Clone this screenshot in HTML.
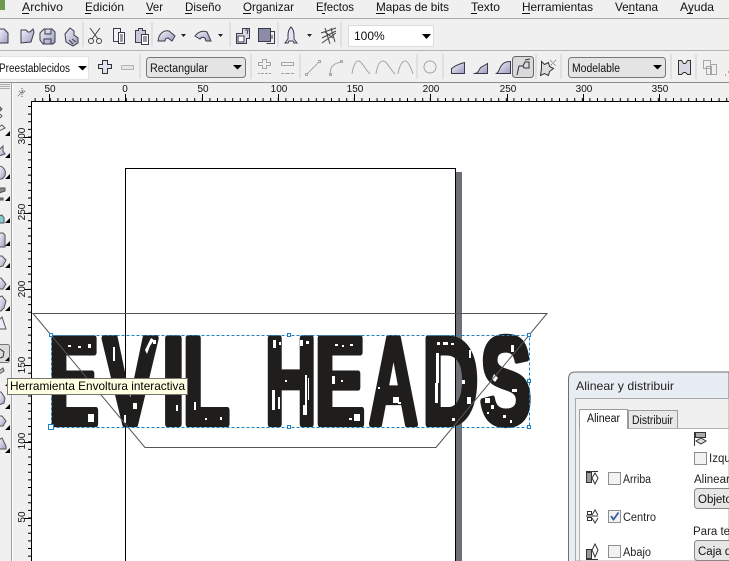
<!DOCTYPE html>
<html><head><meta charset="utf-8"><style>
html,body{margin:0;padding:0;width:729px;height:561px;overflow:hidden;background:#f0f0f0}
svg{display:block;position:absolute;left:0;top:0}
text{font-family:"Liberation Sans",sans-serif}
.m{font-size:12px;fill:#111}
.r{font-size:10px;fill:#111;text-anchor:middle}
.d{fill:none;stroke:#a6a6a6;stroke-width:1}
.s{stroke:#cfcfcf;stroke-width:1}
.c{font-size:11.5px;fill:#111}
.L{font-weight:bold;font-size:100px;fill:#1f1e1c;stroke:#1f1e1c;stroke-width:5;stroke-linejoin:round;paint-order:stroke}
</style></head><body>
<svg width="729" height="561" viewBox="0 0 729 561" xmlns="http://www.w3.org/2000/svg">
<defs><linearGradient id="lv" x1="0" y1="0" x2="1" y2="1"><stop offset="0" stop-color="#f4f4fb"/><stop offset="1" stop-color="#9c9cc0"/></linearGradient></defs>
<rect width="729" height="561" fill="#f0f0f0"/>

<!-- menu -->
<rect x="0" y="18" width="729" height="1" fill="#a9a9a9"/>
<rect x="0" y="50" width="729" height="1" fill="#b4b4b4"/>
<rect x="0" y="82" width="729" height="1" fill="#8e8e8e"/>
<g class="m">
<text x="22" y="11" textLength="41" lengthAdjust="spacingAndGlyphs">Archivo</text><rect x="22" y="13" width="7" height="1" fill="#111"/>
<text x="85" y="11" textLength="39" lengthAdjust="spacingAndGlyphs">Edición</text><rect x="85" y="13" width="6" height="1" fill="#111"/>
<text x="146" y="11" textLength="17" lengthAdjust="spacingAndGlyphs">Ver</text><rect x="146" y="13" width="7" height="1" fill="#111"/>
<text x="185" y="11" textLength="36" lengthAdjust="spacingAndGlyphs">Diseño</text><rect x="185" y="13" width="7" height="1" fill="#111"/>
<text x="243" y="11" textLength="51" lengthAdjust="spacingAndGlyphs">Organizar</text><rect x="243" y="13" width="8" height="1" fill="#111"/>
<text x="316" y="11" textLength="38" lengthAdjust="spacingAndGlyphs">Efectos</text><rect x="322" y="13" width="3" height="1" fill="#111"/>
<text x="376" y="11" textLength="73" lengthAdjust="spacingAndGlyphs">Mapas de bits</text><rect x="376" y="13" width="9" height="1" fill="#111"/>
<text x="471" y="11" textLength="29" lengthAdjust="spacingAndGlyphs">Texto</text><rect x="471" y="13" width="6" height="1" fill="#111"/>
<text x="522" y="11" textLength="71" lengthAdjust="spacingAndGlyphs">Herramientas</text><rect x="522" y="13" width="8" height="1" fill="#111"/>
<text x="615" y="11" textLength="43" lengthAdjust="spacingAndGlyphs">Ventana</text><rect x="628" y="13" width="6" height="1" fill="#111"/>
<text x="680" y="11" textLength="34" lengthAdjust="spacingAndGlyphs">Ayuda</text><rect x="687" y="13" width="6" height="1" fill="#111"/>
</g>
<path d="M0 0h5v10h-5z" fill="#6d9a4e"/>

<!-- toolbar 1 -->
<g class="s"><line x1="83" y1="22" x2="83" y2="47"/><line x1="152" y1="22" x2="152" y2="47"/><line x1="230" y1="22" x2="230" y2="47"/><line x1="278" y1="22" x2="278" y2="47"/><line x1="341" y1="22" x2="341" y2="47"/></g>
<rect x="348.500" y="25.500" width="85" height="21" fill="#fff" stroke="#dcdcdc"/>
<text x="354" y="40" font-size="12" fill="#111">100%</text>
<path d="M422 34h9l-4.500 5z" fill="#000"/>

<g stroke="#3a3a4a" fill="url(#lv)">
<path d="M-1 29h5l4 4v10h-9z"/>
<path d="M21 30h5l2 2h2l3-3 1 3-3 10-10 1z"/>
<path d="M44 29h8l3 3v10l-2 2h-10l-3-4v-7z"/><path d="M45 29v5h6v-5M44 44v-5h7v5" fill="none"/>
<path d="M65 34l5-6 4 3v4l4 3v5l-5 3-7-4z"/>
<path d="M72 39l4 3M69 40l4 4" fill="none"/>
<path d="M113.500 28.500h7v4h-1v9h-6z" fill="#f2f2f6"/><path d="M118.500 32.500h6v11h-6z" fill="#fff"/><path d="M120 35h3M120 37h3M120 39h3M120 41h3" fill="none"/>
<path d="M135.500 30.500h3v-2h4v2h3v12h-10z" fill="#c8c8d8"/><path d="M141.500 34.500h7v10h-7z" fill="#fff"/><path d="M143 37h4M143 39h4M143 41h4" fill="none"/>
<path d="M158 41c1-8 6-11 11-10l6 5-3 5-4-3c-2 0-3 1-3 3z"/>
<path d="M195 36c3-4 8-6 12-4l4 9h-5l-1-3c-2-1-4-1-5 1z"/>
<path d="M236.500 33.500h6v-5h7v10h-3v5h-10z" fill="#d8d8e6"/><path d="M238 36h6v6h-6z" fill="#fff"/><path d="M245 30h3l-1 4" fill="none"/>
<path d="M258.500 28.500h12v13h-12z" fill="#8b8da6"/><path d="M270.500 31.500h4v12h-8" fill="none"/><path d="M272 35v4" fill="none"/>
<path d="M291 27c2 2 3 5 3 8v4l3 4h-3l-1-2h-4l-1 2h-3l3-4v-4c0-3 1-6 3-8z" fill="#e3e3f0"/>
</g>
<path d="M321 33l15-5M322 38l14-7M325 28l5 16M331 28l4 14M322 43l14-10M325 32l8 6" fill="none" stroke="#444"/>
<g fill="#222"><path d="M181 34h5l-2.500 3zM218 34h5l-2.500 3zM307 34h5l-2.500 3z"/></g>
<!-- scissors -->
<g fill="none" stroke="#444"><circle cx="91" cy="41" r="2.500"/><circle cx="99" cy="41" r="2.500"/><path d="M92 39l8-11M98 39l-8-11"/></g>

<!-- toolbar 2 -->
<g class="s"><line x1="140" y1="54" x2="140" y2="79"/><line x1="251" y1="54" x2="251" y2="79"/><line x1="300" y1="54" x2="300" y2="79"/><line x1="417" y1="54" x2="417" y2="79"/><line x1="443" y1="54" x2="443" y2="79"/><line x1="536" y1="54" x2="536" y2="79"/><line x1="561" y1="54" x2="561" y2="79"/><line x1="671" y1="54" x2="671" y2="79"/><line x1="696" y1="54" x2="696" y2="79"/></g>
<rect x="-2.500" y="56.500" width="91" height="23" rx="2" fill="#fff" stroke="#e2e2e2"/>
<text x="-1" y="72" class="c" textLength="71" lengthAdjust="spacingAndGlyphs">Preestablecidos</text>
<path d="M78 66h9l-4.500 4.500z" fill="#000"/>
<path d="M102.500 60.500h5v4h4v4h-4v5h-5v-5h-4v-4h4z" fill="#dfe3f2" stroke="#333"/>
<rect x="121.500" y="65.500" width="12" height="4" fill="#e4e4ea" stroke="#b5b5b5"/>
<rect x="146.500" y="57.500" width="99" height="20" rx="3" fill="#e4e4e4" stroke="#777"/>
<text x="150" y="72" class="c" textLength="58" lengthAdjust="spacingAndGlyphs">Rectangular</text>
<path d="M233 65h9l-4.500 4.500z" fill="#000"/>
<g class="d"><path d="M262.500 59.500h4v3h4v3h-4v3h-4v-3h-4v-3h4z"/><path d="M258 73.500h2m1 0h3m1 0h3m1 0h2"/><path d="M281.500 62.500h12v3h-12zM281 73.500h3m1 0h5m1 0h3"/><path d="M307 74l12-12"/><rect x="305.500" y="73.500" width="2" height="2"/><rect x="318.500" y="60.500" width="2" height="2"/><path d="M330 75c0-8 3-12 12-13"/><rect x="329.500" y="73.500" width="2" height="2"/><rect x="340.500" y="60.500" width="2" height="2"/><path d="M352 74c1-8 4-14 7-13s6 8 11 13"/><path d="M376 74c1-7 3-13 7-13s6 7 12 13"/><path d="M398 74c1-7 4-13 7-13s6 7 8 13"/><circle cx="430" cy="67" r="6"/></g>
<g stroke="#3a3a4a" fill="url(#lv)">
<path d="M451.500 73.500v-5c4-3 9-5 13-6v11z"/>
<path d="M473.500 73.500h1c5 0 4-6 8-7l5-3v10z"/>
<path d="M496.500 73.500c3-2 3-6 5-8 2-3 5-4 9-4v12z"/>
</g>
<rect x="512.500" y="56.500" width="21" height="21" rx="3" fill="#dadadd" stroke="#666"/>
<path d="M517 75l2-9h4l2-4h4v6h-5l-1-2" fill="none" stroke="#333"/><path d="M525 60l5-1" stroke="#333"/>
<path d="M541.500 61.500l3 3 4-2 1 4 4 2-4 3-1 4-4-2-4 2 1-7z" fill="#ddd" stroke="#333"/>
<path d="M550 60l6 6M556 60l-6 6" stroke="#666" stroke-dasharray="1 1"/>
<rect x="568.500" y="57.500" width="97" height="20" rx="3" fill="#e4e4e4" stroke="#777"/>
<text x="572" y="72" class="c" textLength="48" lengthAdjust="spacingAndGlyphs">Modelable</text>
<path d="M653 65h9l-4.500 4.500z" fill="#000"/>
<path d="M678.500 60.500h3l2 3h2l2-3h3v14h-3l-2-2h-2l-2 2h-3z" fill="#d8d8e4" stroke="#333"/>
<g class="d"><rect x="703.500" y="60.500" width="7" height="8"/><rect x="710.500" y="64.500" width="6" height="10"/><rect x="706.500" y="66.500" width="5" height="8"/></g>
<path d="M725 75h1M728 72h1" stroke="#b33"/>

<!-- rulers -->
<rect x="0" y="83" width="729" height="19" fill="#f0f0f0"/>
<rect x="11" y="83" width="1" height="478" fill="#a0a0a0"/>
<rect x="12" y="83" width="1" height="478" fill="#fff"/>
<path d="M0 84.500h10M0 86.500h10M0 88.500h10" stroke="#aaa"/>
<path d="M19 91l3 3M25 91l-3 3M22 88v9M18 96l6-6" stroke="#555" stroke-dasharray="1 1" fill="none"/>
<rect x="31" y="102" width="698" height="459" fill="#fff"/>
<rect x="31" y="101" width="698" height="1" fill="#000"/>
<rect x="31" y="101" width="1" height="460" fill="#000"/>
<line x1="31" y1="99.500" x2="729" y2="99.500" stroke="#000" stroke-width="3" stroke-dasharray="1 6.600" stroke-dashoffset="-3.600"/>
<line x1="29.500" y1="102" x2="29.500" y2="561" stroke="#000" stroke-width="3" stroke-dasharray="1 6.620" stroke-dashoffset="-4"/>
<g stroke="#000"><path d="M49.500 94v8M125.500 94v8M202.500 94v8M278.500 94v8M354.500 94v8M430.500 94v8M507.500 94v8M583.500 94v8M659.500 94v8"/>
<path d="M24 137.500h7M24 213.500h7M24 289.500h7M24 365.500h7M24 442.500h7M24 518.500h7"/></g>
<g class="r"><text x="50" y="92">50</text><text x="125" y="92">0</text><text x="203" y="92">50</text><text x="279" y="92">100</text><text x="355" y="92">150</text><text x="431" y="92">200</text><text x="508" y="92">250</text><text x="584" y="92">300</text><text x="660" y="92">350</text></g>
<g class="r">
<text transform="translate(25,136) rotate(-90)">300</text>
<text transform="translate(25,212) rotate(-90)">250</text>
<text transform="translate(25,289) rotate(-90)">200</text>
<text transform="translate(25,365) rotate(-90)">150</text>
<text transform="translate(25,441) rotate(-90)">100</text>
<text transform="translate(25,517) rotate(-90)">50</text></g>

<!-- toolbox -->
<g fill="url(#lv)" stroke="#555">
<path d="M0 107l2 2-2 2zM0 114l2 2-2 2" fill="#fff"/>
<path d="M-1 127l3-2 3 3-6 3z" fill="#eee"/>
<path d="M-1 150l4-4v5l2 3-6 2z"/>
<path d="M-1 166a7 7 0 0 1 3 13h-3z"/>
<path d="M-1 188h6v3l-6 2zM-1 198h4v2h-4z" fill="#888"/>
<path d="M-1 216l3-1 2 3v5h-5z" fill="#7fd0d8"/>
<path d="M-1 233h4l2 2v12h-6z"/>
<path d="M-1 256h3l4 4-3 6-4 1z"/>
<path d="M-1 278h2l5 6-3 5h-4z"/>
<path d="M-1 297l3-1 4 5-2 7-3 3h-2z"/>
<path d="M-1 320l3-3 4 12h-7z" fill="#ececf6"/>
</g>
<rect x="-3.500" y="344.500" width="13" height="18" rx="2" fill="#dcdcdc" stroke="#777"/>
<path d="M0 349l4 3-1 5-3 1" fill="none" stroke="#333"/>
<g fill="url(#lv)" stroke="#555"><path d="M-1 371l4-3 1 3-5 3z"/><path d="M-1 392h2l4 6-1 5-5 2z"/><path d="M-1 416l3 0 4 5-3 5h-4z"/><path d="M-1 440l3-2 4 8v3h-7z"/></g>
<g fill="#000"><path d="M10 131v5h-5zM10 153v5h-5zM10 174v5h-5zM10 196v5h-5zM10 218v5h-5zM10 241v5h-5zM10 263v5h-5zM10 285v5h-5zM10 306v5h-5zM9 357v4h-4zM10 381v5h-5zM10 404v5h-5zM10 425v5h-5zM10 448v5h-5z"/></g>

<!-- page -->
<rect x="456" y="172" width="6" height="389" fill="#6e7077"/>
<path d="M125.500 561V168.500H455.500V561" fill="none" stroke="#000"/>

<!-- artwork -->
<g>
<text class="L" transform="translate(48.500,424) scale(.76,1.24)">E</text>
<text class="L" transform="translate(103,424) scale(.813,1.24)">V</text>
<text class="L" transform="translate(161.500,424) scale(.855,1.24)">I</text>
<text class="L" transform="translate(182.400,424) scale(.78,1.24)">L</text>
<text class="L" transform="translate(264.800,424) scale(.72,1.24)">H</text>
<text class="L" transform="translate(314.500,424) scale(.76,1.24)">E</text>
<text class="L" transform="translate(369,424) scale(.679,1.24)">A</text>
<text class="L" transform="translate(422.300,424) scale(.78,1.24)">D</text>
<text class="L" transform="translate(480,424) scale(.775,1.24)">S</text>
</g>
<!-- distress -->
<path fill="#fff" d="M68 345h3v2h-3zM78 346h3v2h-3zM88 344h3v4h-3zM88 414h6v8h-6zM113 347h2v14h-2zM145 350l6-12 3 2-4 6-3 8zM153 340h3v4h-3zM133 403h4v6h-4zM124 415h2v8h-2zM176 405h2v6h-2zM194 402h2v8h-2zM205 418h2v2h-2zM220 417h2v3h-2zM175 387h2v3h-2z
M273 340h3v8h-3zM279 342h2v3h-2zM272 390h3v20h-3zM278 397h2v12h-2zM300 340h3v6h-3zM306 341h3v3h-3zM305 375h2v40h-2zM308 378h1v22h-1zM303 405h2v10h-2zM285 380h2v2h-2z
M335 344h3v2h-3zM342 345h2v2h-2zM350 344h3v2h-3zM332 376h3v8h-3zM341 380h2v2h-2zM354 414h6v7h-6zM349 418h3v2h-3zM378 387h2v2h-2zM393 397h6v6h-6zM398 402h3v2h-3z
M437 342h3v3h-3zM443 342h5v3h-5zM451 343h3v2h-3zM436 353h3v30h-3zM435 383h3v20h-3zM469 350h2v8h-2zM462 380h3v4h-3zM467 397h4v7h-4zM452 418h3v3h-3z
M494 374l4 4-3 4-3-3zM485 398h5v5h-5zM491 405h3v4h-3zM503 415h3v3h-3zM512 389h5v3h-5zM510 420h2v3h-2zM511 345h3v7h-3zM487 412h2v2h-2z"/>

<!-- envelope -->
<path d="M33 313.500H547L436 447.500H145Z" fill="none" stroke="#555"/>

<!-- selection -->
<rect x="51.500" y="335.500" width="478" height="92" fill="none" stroke="#1f7fc4" stroke-dasharray="3 2"/>
<g fill="#fff" stroke="#1f7fc4">
<rect x="49.500" y="333.500" width="3" height="3"/><rect x="287.500" y="333.500" width="3" height="3"/><rect x="527.500" y="333.500" width="3" height="3"/>
<rect x="527.500" y="379.500" width="3" height="3"/><rect x="527.500" y="425.500" width="3" height="3"/><rect x="287.500" y="425.500" width="3" height="3"/>
<rect x="48.500" y="424.500" width="5" height="5"/></g>

<!-- tooltip -->
<rect x="7.500" y="378.500" width="180" height="16" fill="#ffffe1" stroke="#767676"/>
<text x="10" y="390" font-size="12" fill="#000" textLength="175" lengthAdjust="spacingAndGlyphs">Herramienta Envoltura interactiva</text>

<!-- dialog -->
<path d="M568.500 561V379q0-7 7-7H729V561" fill="#e8edf3" stroke="#6e6e6e"/>
<text x="576" y="390" font-size="12" fill="#222" textLength="98" lengthAdjust="spacingAndGlyphs">Alinear y distribuir</text>
<path d="M575.500 561V398.500H729V561Z" fill="#f0f0f0" stroke="#a8a8a8"/>
<path d="M579.500 561V428.500H729V561Z" fill="#fff" stroke="#b0b0b0"/>
<path d="M628.500 428V410.500H677.500V428" fill="#e8e8e8" stroke="#9a9a9a"/>
<path d="M579.500 429V409.500H627.500V429" fill="#fff" stroke="#9a9a9a"/>
<text x="587" y="422" font-size="11.500" fill="#111" textLength="33" lengthAdjust="spacingAndGlyphs">Alinear</text>
<text x="632" y="424" font-size="11.500" fill="#111" textLength="41" lengthAdjust="spacingAndGlyphs">Distribuir</text>

<g fill="#f2f2f2" stroke="#8e8e8e">
<rect x="608.500" y="472.500" width="12" height="12"/><rect x="608.500" y="510.500" width="12" height="12"/><rect x="608.500" y="545.500" width="12" height="12"/><rect x="694.500" y="452.500" width="12" height="12"/></g>
<path d="M611 516l2.500 3.500 5-7" fill="none" stroke="#3a5a9e" stroke-width="1.800"/>
<g font-size="11.500" fill="#222">
<text x="623" y="483" textLength="28" lengthAdjust="spacingAndGlyphs">Arriba</text>
<text x="623" y="521" textLength="33" lengthAdjust="spacingAndGlyphs">Centro</text>
<text x="623" y="556" textLength="28" lengthAdjust="spacingAndGlyphs">Abajo</text>
<text x="709" y="462">Izqu</text>
<text x="694" y="483">Alinear</text>
<text x="693" y="535">Para te</text>
</g>
<rect x="694.500" y="488.500" width="50" height="20" rx="3" fill="#e6e6e6" stroke="#888"/>
<text x="698" y="503" font-size="11.500" fill="#111">Objeto</text>
<rect x="694.500" y="540.500" width="50" height="20" rx="3" fill="#e6e6e6" stroke="#888"/>
<text x="698" y="555" font-size="11.500" fill="#111">Caja de</text>

<g fill="none" stroke="#333">
<rect x="695.500" y="432.500" width="10" height="5" fill="#aaa"/><path d="M694.500 432v14"/><path d="M696 441l5-3 5 3-5 3z" fill="#ddd"/>
<path d="M586 471.500h12"/><rect x="586.500" y="472.500" width="5" height="10" fill="#999"/><path d="M595 473l3 5-3 6-3-6z"/>
<path d="M586 516h12M587.500 511.500h4v3h-4zM587.500 517.500h4v3h-4z"/><path d="M592 515l3-5 3 5M592 518l3 5 3-5"/>
<path d="M586 559.500h12"/><rect x="586.500" y="549.500" width="5" height="9" fill="#999"/><path d="M595 544l3 6-3 7-3-7z"/>
</g>
</svg>
</body></html>
